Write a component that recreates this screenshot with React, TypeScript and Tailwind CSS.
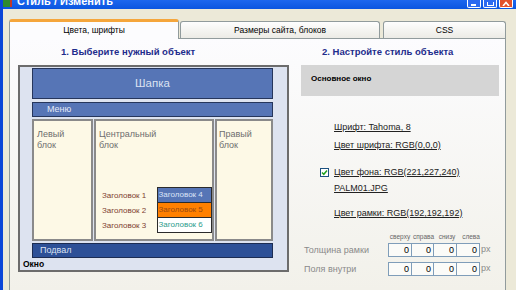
import React from "react";

const sides = [
  { label: "сверху", w: "w-[24px]" },
  { label: "справа", w: "w-[23px]" },
  { label: "снизу", w: "w-[24px]" },
  { label: "слева", w: "w-[24px]" },
];

const SizeRow = ({ label }: { label: string }) => (
  <div className="flex items-center h-[14px]">
    <div className="w-[93px] pl-[9px] text-[9px] text-[#8a8a8a] leading-[14px]">{label}</div>
    {sides.map((s, i) => (
      <div
        key={s.label}
        className={`${s.w} ${i > 0 ? "-ml-px" : ""} h-[14px] border border-[#7F9DB9] bg-[#fbfbf8] text-right pr-[2px] text-[9px] leading-[12px] text-black`}
      >
        0
      </div>
    ))}
    <span className="ml-[1px] text-[9px] text-[#8a8a8a]">px</span>
  </div>
);

export default function App() {
  return (
    <div className="w-[516px] h-[290px] overflow-hidden bg-[#ECE9D8] border-l-[3px] border-[#0B46D8] flex flex-col font-['Liberation_Sans',Arial,sans-serif]">
      {/* title bar, mostly off screen */}
      <div className="h-[9px] shrink-0 bg-gradient-to-b from-[#1C67EE] to-[#0A55E0] flex justify-between overflow-hidden">
        <div className="flex items-start">
          <div className="w-[9px] h-[7px] bg-[#2f8a2f] border-r-2 border-[#c0392b]" />
          <div className="ml-[5px] -mt-[6px] text-[11px] leading-[14px] font-bold text-white">Стиль / Изменить</div>
        </div>
        <div className="flex items-end gap-[2px] pr-[3px] pb-[1px]">
          <div className="w-[14px] h-[8px] rounded-b-[2px] border border-t-0 border-white bg-[#2D6BF0] flex items-end justify-center pb-[1px]">
            <div className="w-[5px] h-[2px] bg-white mr-[2px]" />
          </div>
          <div className="w-[14px] h-[8px] rounded-b-[2px] border border-t-0 border-white bg-[#2D6BF0] flex items-end justify-center pb-[1px]">
            <div className="w-[7px] h-[4px] border border-t-0 border-white" />
          </div>
          <div className="w-[14px] h-[8px] rounded-b-[2px] border border-t-0 border-white bg-[#E2512B] flex items-end justify-center pb-[1px]">
            <svg width="8" height="5" viewBox="0 0 8 5">
              <path d="M1 5 L4 1.5 L7 5" stroke="white" strokeWidth="1.6" fill="none" />
            </svg>
          </div>
        </div>
      </div>

      <div className="flex-1 flex flex-col pl-[6px] pt-[9px]">
        {/* tabs */}
        <div className="flex items-end h-[20px] text-[8.5px] text-black">
          <div className="w-[170px] h-[20px] bg-[#FCFCFE] border-x border-[#919B9C] border-t-[3px] border-t-[#F5A63C] rounded-t-[3px] flex items-center justify-center -mb-px relative z-10">
            Цвета, шрифты
          </div>
          <div className="ml-px w-[200px] h-[17px] bg-gradient-to-b from-[#FEFEFE] to-[#ECEBE5] border border-b-0 border-[#919B9C] rounded-t-[3px] flex items-center justify-center">
            Размеры сайта, блоков
          </div>
          <div className="ml-[3px] w-[123px] h-[17px] bg-gradient-to-b from-[#FEFEFE] to-[#ECEBE5] border border-b-0 border-[#919B9C] rounded-t-[3px] flex items-center justify-center">
            CSS
          </div>
        </div>

        {/* panel */}
        <div className="w-[497px] flex-1 border border-b-0 border-[#919B9C] bg-gradient-to-b from-[#FCFCFE] to-[#F2F1EA] flex">
          {/* left */}
          <div className="w-[285px] flex flex-col">
            <div className="h-[13px] mt-[6px] pl-[51px] text-[9.5px] font-bold text-[#1E2C8C] leading-[13px]">
              1. Выберите нужный объект
            </div>
            <div className="mt-[7px] ml-[8px] w-[271px] h-[207px] border-2 border-[#6c6c6c] bg-[#DDE3F0] flex flex-col">
              <div className="ml-[12px] mt-[1px] w-[241px] h-[31px] bg-[#5675B6] border border-[#26365c] flex items-center justify-center text-[11.5px] text-[#DCE2F2]">
                Шапка
              </div>
              <div className="ml-[12px] mt-[3px] w-[241px] h-[15px] bg-[#5675B6] border border-[#26365c] pl-[14px] text-[9px] leading-[13px] text-[#E4E9F7]">
                Меню
              </div>
              <div className="ml-[12px] mt-[2px] w-[241px] h-[122px] flex gap-[1px] text-[9px] leading-[11px] text-[#6e6e6e]">
                <div className="w-[61px] border-2 border-[#8a8a8a] bg-[#FDF9E6] pl-[3px] pt-[8px]">
                  Левый
                  <br />
                  блок
                </div>
                <div className="w-[120px] border-2 border-[#8a8a8a] bg-[#FDF9E6] pl-[3px] pt-[8px] flex flex-col">
                  <div>
                    Центральный
                    <br />
                    блок
                  </div>
                  <div className="mt-auto mb-[6px] flex text-[8px]">
                    <div className="w-[58px] pl-[3px] pt-[1px] text-[#7D3F32] leading-[15px]">
                      <div>Заголовок 1</div>
                      <div>Заголовок 2</div>
                      <div>Заголовок 3</div>
                    </div>
                    <div className="w-[56px] border border-[#2b2b2b] leading-[14px]">
                      <div className="h-[14px] bg-[#5675B6] text-[#DCE4F6] pl-[1px]">Заголовок 4</div>
                      <div className="h-[15px] border-t border-[#2b2b2b] bg-[#FF8000] text-[#9A4A12] pl-[1px]">Заголовок 5</div>
                      <div className="h-[15px] border-t border-[#2b2b2b] bg-white text-[#2C9C8C] pl-[1px]">Заголовок 6</div>
                    </div>
                  </div>
                </div>
                <div className="w-[58px] border-2 border-[#8a8a8a] bg-[#FDF9E6] pl-[2px] pt-[8px]">
                  Правый
                  <br />
                  блок
                </div>
              </div>
              <div className="ml-[12px] mt-[2px] w-[241px] h-[15px] bg-[#2D5097] border border-[#1c2c52] pl-[7px] text-[9px] leading-[13px] text-[#DCE3F3]">
                Подвал
              </div>
              <div className="ml-[3px] mt-[2px] text-[8.5px] leading-[9px] font-bold text-black">Окно</div>
            </div>
          </div>

          {/* right */}
          <div className="flex-1 flex flex-col">
            <div className="h-[13px] mt-[6px] pl-[27px] text-[9.5px] font-bold text-[#1E2C8C] leading-[13px]">
              2. Настройте стиль объекта
            </div>
            <div className="mt-[7px] ml-[6px] w-[198px] h-[31px] bg-[#D5D5D5] pl-[10px] pt-[9px] text-[8px] font-bold text-black leading-[10px]">
              Основное окно
            </div>
            <div className="flex flex-col pl-[39px] text-[9px] leading-[12px] text-[#222] underline">
              <div className="mt-[25px]">Шрифт: Tahoma, 8</div>
              <div className="mt-[6px]">Цвет шрифта: RGB(0,0,0)</div>
              <div className="mt-[15px] -ml-[14px] flex items-center">
                <div className="w-[9px] h-[9px] border border-[#1C5180] bg-white flex items-center justify-center mr-[5px]">
                  <svg width="7" height="7" viewBox="0 0 7 7">
                    <path d="M1 3.5 L2.8 5.3 L6 1.5" stroke="#21A121" strokeWidth="1.5" fill="none" />
                  </svg>
                </div>
                <span>Цвет фона: RGB(221,227,240)</span>
              </div>
              <div className="mt-[4px]">PALM01.JPG</div>
              <div className="mt-[13px]">Цвет рамки: RGB(192,192,192)</div>
            </div>
            <div className="mt-[14px] flex h-[8px] pl-[93px] text-[6.5px] leading-[8px] text-[#666]">
              {sides.map((s) => (
                <div key={s.label} className={`${s.w} text-center`}>
                  {s.label}
                </div>
              ))}
            </div>
            <div className="mt-[2px]">
              <SizeRow label="Толщина рамки" />
            </div>
            <div className="mt-[5px]">
              <SizeRow label="Поля внутри" />
            </div>
          </div>
        </div>
      </div>
    </div>
  );
}
